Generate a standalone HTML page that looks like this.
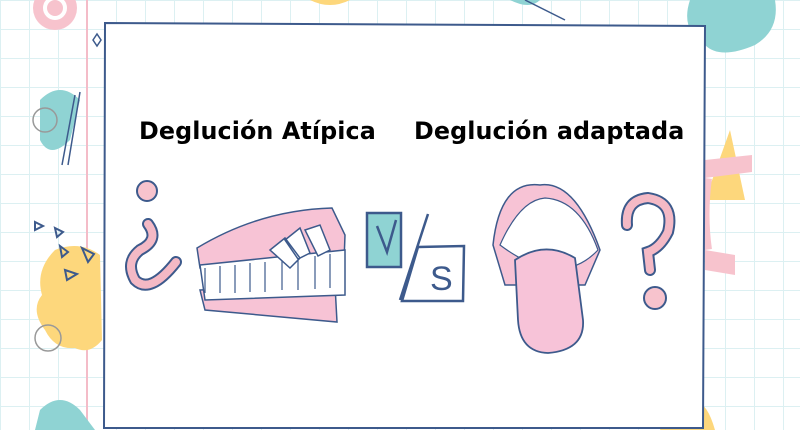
<!DOCTYPE html>
<html><head><meta charset="utf-8"><style>
html,body{margin:0;padding:0}
body{width:800px;height:430px;overflow:hidden;position:relative;background:#fff;
background-image:linear-gradient(#dcf0f2 1px,transparent 1px),linear-gradient(90deg,#dcf0f2 1px,transparent 1px);background-size:29px 29px;background-position:0 0}
.t{position:absolute;font-family:"DejaVu Sans","Liberation Sans",sans-serif;font-weight:bold;font-size:23.8px;color:#000;white-space:nowrap;letter-spacing:0.1px}
svg{position:absolute;left:0;top:0}
</style></head><body>
<svg width="800" height="430" viewBox="0 0 800 430">
<line x1="87" y1="0" x2="87" y2="430" stroke="#f4bcc8" stroke-width="2"/>
<circle cx="55" cy="8" r="22" fill="#f7c3cd"/><circle cx="55" cy="8" r="10" fill="none" stroke="#fff" stroke-width="4"/>
<path d="M40 100 Q60 80 80 100 L70 140 Q50 160 40 140Z" fill="#8fd3d3"/>
<circle cx="45" cy="120" r="12" fill="none" stroke="#999" stroke-width="1.5"/>
<path d="M75 95 L62 165 M80 92 L68 165" stroke="#3d5a8c" stroke-width="1.5"/>
<path d="M55 250 Q80 240 100 255 L102 340 Q90 355 75 348 Q55 350 45 330 Q30 310 42 295 Q35 270 55 250Z" fill="#fdd77c"/>
<circle cx="48" cy="338" r="13" fill="none" stroke="#999" stroke-width="1.5"/>
<path d="M40 410 Q60 390 80 410 L95 430 L35 430Z" fill="#8fd3d3"/>
<g fill="none" stroke="#3d5a8c" stroke-width="2"><path d="M35 222 l8 4 -8 4z"/><path d="M55 228 l8 4 -6 5z"/><path d="M60 246 l8 6 -6 5z"/><path d="M82 248 l12 6 -6 8z"/><path d="M65 270 l12 4 -10 6z"/></g>
<path d="M93 40 l4-6 4 6 -4 6z" fill="none" stroke="#3d5a8c" stroke-width="1.5"/>
<path d="M310 0 Q330 10 350 0Z" fill="#fdd77c"/>
<path d="M510 0 Q530 10 540 0Z" fill="#8fd3d3"/>
<path d="M525 0 L565 20" stroke="#3d5a8c" stroke-width="1.5"/>
<path d="M690 0 L775 0 Q780 30 755 45 Q720 60 705 45 Q680 30 690 0Z" fill="#8fd3d3"/>
<path d="M730 130 L745 200 L705 200 Z" fill="#fdd77c"/>
<path d="M705 160 L752 155 L752 172 L705 178Z M705 250 L735 255 L735 275 L705 270Z" fill="#f7c3cd"/>
<path d="M705 178 Q700 215 705 250" stroke="#f7c3cd" stroke-width="14" fill="none"/>
<path d="M660 430 Q670 395 690 405 Q705 395 715 430Z" fill="#fdd77c"/>
<g fill="none" stroke="#3d5a8c" stroke-width="2"><path d="M660 40 q2-8 7-2 q5-6 6 2 l-6 12z"/><path d="M690 60 l-2 10 l10-4"/></g>
<path d="M105 23 L705 26 L703 428 L104 428 Z" fill="#fff" stroke="#3d5a8c" stroke-width="2"/>
<circle cx="147" cy="191" r="10" fill="#f7c3cd" stroke="#3d5a8c" stroke-width="2"/>
<path d="M148 224 Q160 240 140 250 Q125 262 135 280 Q150 295 176 262" fill="none" stroke="#3d5a8c" stroke-width="12" stroke-linecap="round"/>
<path d="M148 224 Q160 240 140 250 Q125 262 135 280 Q150 295 176 262" fill="none" stroke="#f4b9c5" stroke-width="8" stroke-linecap="round"/>
<path d="M197 248 Q260 210 332 208 L345 235 L344 262 L200 268Z" fill="#f7c3d5" stroke="#3d5a8c" stroke-width="1.5"/>
<path d="M200 290 L335 285 L337 322 L205 310Z" fill="#f7c3d5" stroke="#3d5a8c" stroke-width="1.5"/>
<path d="M200 265 L345 250 L345 295 L205 300Z" fill="#fff" stroke="#3d5a8c" stroke-width="1.5"/>
<g fill="#fff" stroke="#3d5a8c" stroke-width="1.2"><path d="M205 268 v25 M220 266 v27 M235 265 v28 M250 263 v29 M265 262 v30 M282 260 v30 M298 258 v32 M315 256 v33 M330 254 v34" /></g>
<path d="M270 250 l15-12 15 20 -10 10z M285 240 l15-12 10 25 -12 6z M305 230 l15-5 10 25 -12 6z" fill="#fff" stroke="#3d5a8c" stroke-width="1.5"/>
<rect x="367" y="213" width="34" height="54" fill="#8fd3d3" stroke="#3d5a8c" stroke-width="2.5"/>
<path d="M377 226 L387 252 L396 220" fill="none" stroke="#3d5a8c" stroke-width="2.5"/>
<path d="M418 247 L464 246 L463 301 L402 301Z" fill="#fff" stroke="#3d5a8c" stroke-width="2.5"/>
<path d="M428 214 L400 300" stroke="#3d5a8c" stroke-width="2.5"/>
<text x="430" y="290" font-family="Liberation Sans" font-size="34" fill="#3d5a8c">S</text>
<path d="M493 245 Q500 180 540 185 Q575 180 600 250 L585 285 L505 285Z" fill="#f7c3d5" stroke="#3d5a8c" stroke-width="1.5"/>
<path d="M500 245 Q520 200 545 198 Q580 200 598 250 Q560 290 500 245Z" fill="#fff" stroke="#3d5a8c" stroke-width="1.2"/>
<path d="M515 260 Q545 240 575 258 L583 320 Q585 350 548 353 Q520 352 518 320Z" fill="#f7c3d8" stroke="#3d5a8c" stroke-width="1.8"/>
<path d="M627 225 Q625 200 648 198 Q675 202 668 232 Q660 248 648 252 L650 270" fill="none" stroke="#3d5a8c" stroke-width="12" stroke-linecap="round"/>
<path d="M627 225 Q625 200 648 198 Q675 202 668 232 Q660 248 648 252 L650 270" fill="none" stroke="#f4b9c5" stroke-width="8" stroke-linecap="round"/>
<circle cx="655" cy="298" r="11" fill="#f7c3cd" stroke="#3d5a8c" stroke-width="2"/>
</svg>
<div class="t" style="left:139px;top:117px">Deglución Atípica</div>
<div class="t" style="left:414px;top:117px">Deglución adaptada</div>
</body></html>
